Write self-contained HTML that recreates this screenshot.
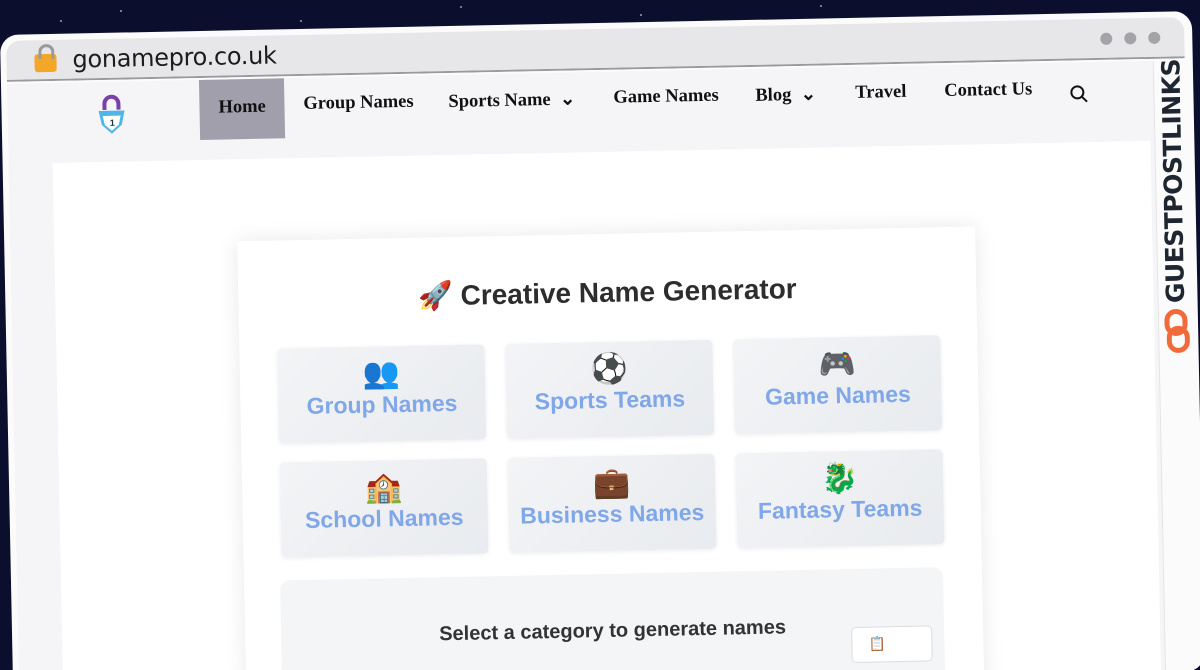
<!DOCTYPE html>
<html><head><meta charset="utf-8"><style>
*{margin:0;padding:0;box-sizing:border-box}
html{width:1200px;height:670px;overflow:hidden}
body{width:1200px;height:670px;overflow:hidden;background:#0b0e2c;position:relative;font-family:"Liberation Sans",sans-serif}
.star{position:absolute;width:2px;height:2px;background:#fff;border-radius:50%;opacity:.6}
#win{position:absolute;left:0px;top:35px;width:1192px;height:660px;background:#fbfbfc;border-radius:18px;transform-origin:0 0;transform:rotate(-1.15deg);overflow:hidden}
.tb{position:absolute;left:6px;top:6px;right:8px;height:41px;background:#e7e7e9;border-radius:14px 14px 0 0;border-bottom:2px solid #9a9a9e}
.url{position:absolute;left:66px;top:6px;font-size:24px;color:#1c1c1c;font-family:"DejaVu Sans","Liberation Sans",sans-serif;letter-spacing:-.3px}
.lock{position:absolute;left:28px;top:14px;width:22px;height:18px;background:#f4a628;border-radius:3px}
.lock:before{content:"";position:absolute;left:4px;top:-10px;width:10px;height:12px;border:3px solid #9a9a9e;border-bottom:none;border-radius:8px 8px 0 0}
.dot{position:absolute;top:14px;width:12px;height:12px;border-radius:50%;background:#a4a4a8}
.page{position:absolute;left:6px;top:49px;right:40px;bottom:0;background:#f5f5f7}
.nav{position:absolute;top:0;left:0;right:0;height:80px}
.nav a{position:absolute;top:16px;font-family:"Liberation Serif",serif;font-weight:bold;font-size:18.5px;color:#111;text-decoration:none}
.home{position:absolute;left:192px;top:0;width:85px;height:60px;background:#a09fab}
.inner{position:absolute;left:44px;top:80px;right:4px;bottom:0;background:#fff}
.card{position:absolute;left:183px;top:82px;width:738px;height:500px;background:#fff;box-shadow:0 0 22px rgba(0,0,0,.09)}
h1{position:absolute;left:0;right:0;top:42px;text-align:center;font-size:28px;color:#2d2d2d}
.btn{position:absolute;width:207px;height:95px;background:linear-gradient(135deg,#f3f4f6,#e8ebef);border-radius:5px;box-shadow:0 1px 4px rgba(0,0,0,.08);text-align:center;color:#80a7e8;font-weight:bold;font-size:23px}
.btn .e{display:block;font-size:30px;line-height:34px;margin-top:11px;color:#246}
.box{position:absolute;left:36px;top:340px;width:663px;height:140px;background:#f4f5f7;border-radius:10px}
.box p{position:absolute;left:0;right:0;top:46px;text-align:center;font-weight:bold;font-size:20px;color:#333}
.sm{position:absolute;left:570px;top:58px;width:81px;height:36px;background:#fff;border:1px solid #ddd;border-radius:5px;font-size:14px;padding:8px 16px}
.side{position:absolute;right:6px;top:49px;width:34px;bottom:0;background:#fbfbfc;border-left:1px solid #e4e4e6}
.gpl{position:absolute;left:-108px;top:106px;width:250px;transform:rotate(-90deg);font-weight:bold;font-size:25px;color:#1e2731;font-family:"DejaVu Sans",sans-serif;letter-spacing:-.5px;white-space:nowrap;text-align:center}
</style></head><body>
<div class="star" style="left:120px;top:10px"></div><div class="star" style="left:300px;top:20px"></div><div class="star" style="left:460px;top:6px"></div><div class="star" style="left:640px;top:14px"></div><div class="star" style="left:820px;top:5px"></div><div class="star" style="left:20px;top:200px"></div><div class="star" style="left:8px;top:420px"></div><div class="star" style="left:1196px;top:500px"></div><div class="star" style="left:60px;top:20px"></div>
<div id="win">
<div class="tb"><div class="lock"></div><div class="url">gonamepro.co.uk</div>
<div class="dot" style="right:72px"></div><div class="dot" style="right:48px"></div><div class="dot" style="right:24px"></div></div>
<div class="page">
<div class="nav">
<svg style="position:absolute;left:88px;top:12px" width="32" height="42" viewBox="0 0 32 42"><path d="M9 16V10a7 7 0 0 1 14 0v6" fill="none" stroke="#7b3fa8" stroke-width="4"/><path d="M3 17h26l-3 14-10 9-10-9z" fill="#4fb6e6"/><path d="M7 22h18l-2 9-7 6-7-6z" fill="#fff"/><text x="14" y="32" font-size="9" font-weight="bold" fill="#234">1</text></svg>
<div class="home"></div>
<a style="left:211px;top:18px">Home</a>
<a style="left:296px">Group Names</a>
<a style="left:441px">Sports Name &nbsp;⌄</a>
<a style="left:606px">Game Names</a>
<a style="left:748px">Blog &nbsp;⌄</a>
<a style="left:848px">Travel</a>
<a style="left:937px">Contact Us</a>
<svg style="position:absolute;left:1062px;top:22px" width="20" height="20" viewBox="0 0 20 20"><circle cx="8" cy="8" r="6" fill="none" stroke="#111" stroke-width="2"/><path d="M12.5 12.5l5 5" stroke="#111" stroke-width="2"/></svg>
</div>
<div class="inner">
<div class="card">
<h1>🚀 Creative Name Generator</h1>
<div class="btn" style="left:38px;top:108px"><span class="e">👥</span>Group Names</div>
<div class="btn" style="left:266px;top:108px"><span class="e">⚽</span>Sports Teams</div>
<div class="btn" style="left:494px;top:108px"><span class="e">🎮</span>Game Names</div>
<div class="btn" style="left:38px;top:222px"><span class="e">🏫</span>School Names</div>
<div class="btn" style="left:266px;top:222px"><span class="e">💼</span>Business Names</div>
<div class="btn" style="left:494px;top:222px"><span class="e">🐉</span>Fantasy Teams</div>
<div class="box"><p>Select a category to generate names</p><div class="sm">📋</div></div>
</div>
</div>
</div>
<div class="side"><div class="gpl">GUESTPOSTLINKS</div>
<svg style="position:absolute;left:5px;top:248px" width="26" height="46" viewBox="0 0 26 46"><rect x="3" y="3" width="18" height="22" rx="9" fill="none" stroke="#f06a3a" stroke-width="5"/><rect x="5" y="20" width="18" height="22" rx="9" fill="none" stroke="#f06a3a" stroke-width="5"/></svg>
</div>
</div>
</body></html>
